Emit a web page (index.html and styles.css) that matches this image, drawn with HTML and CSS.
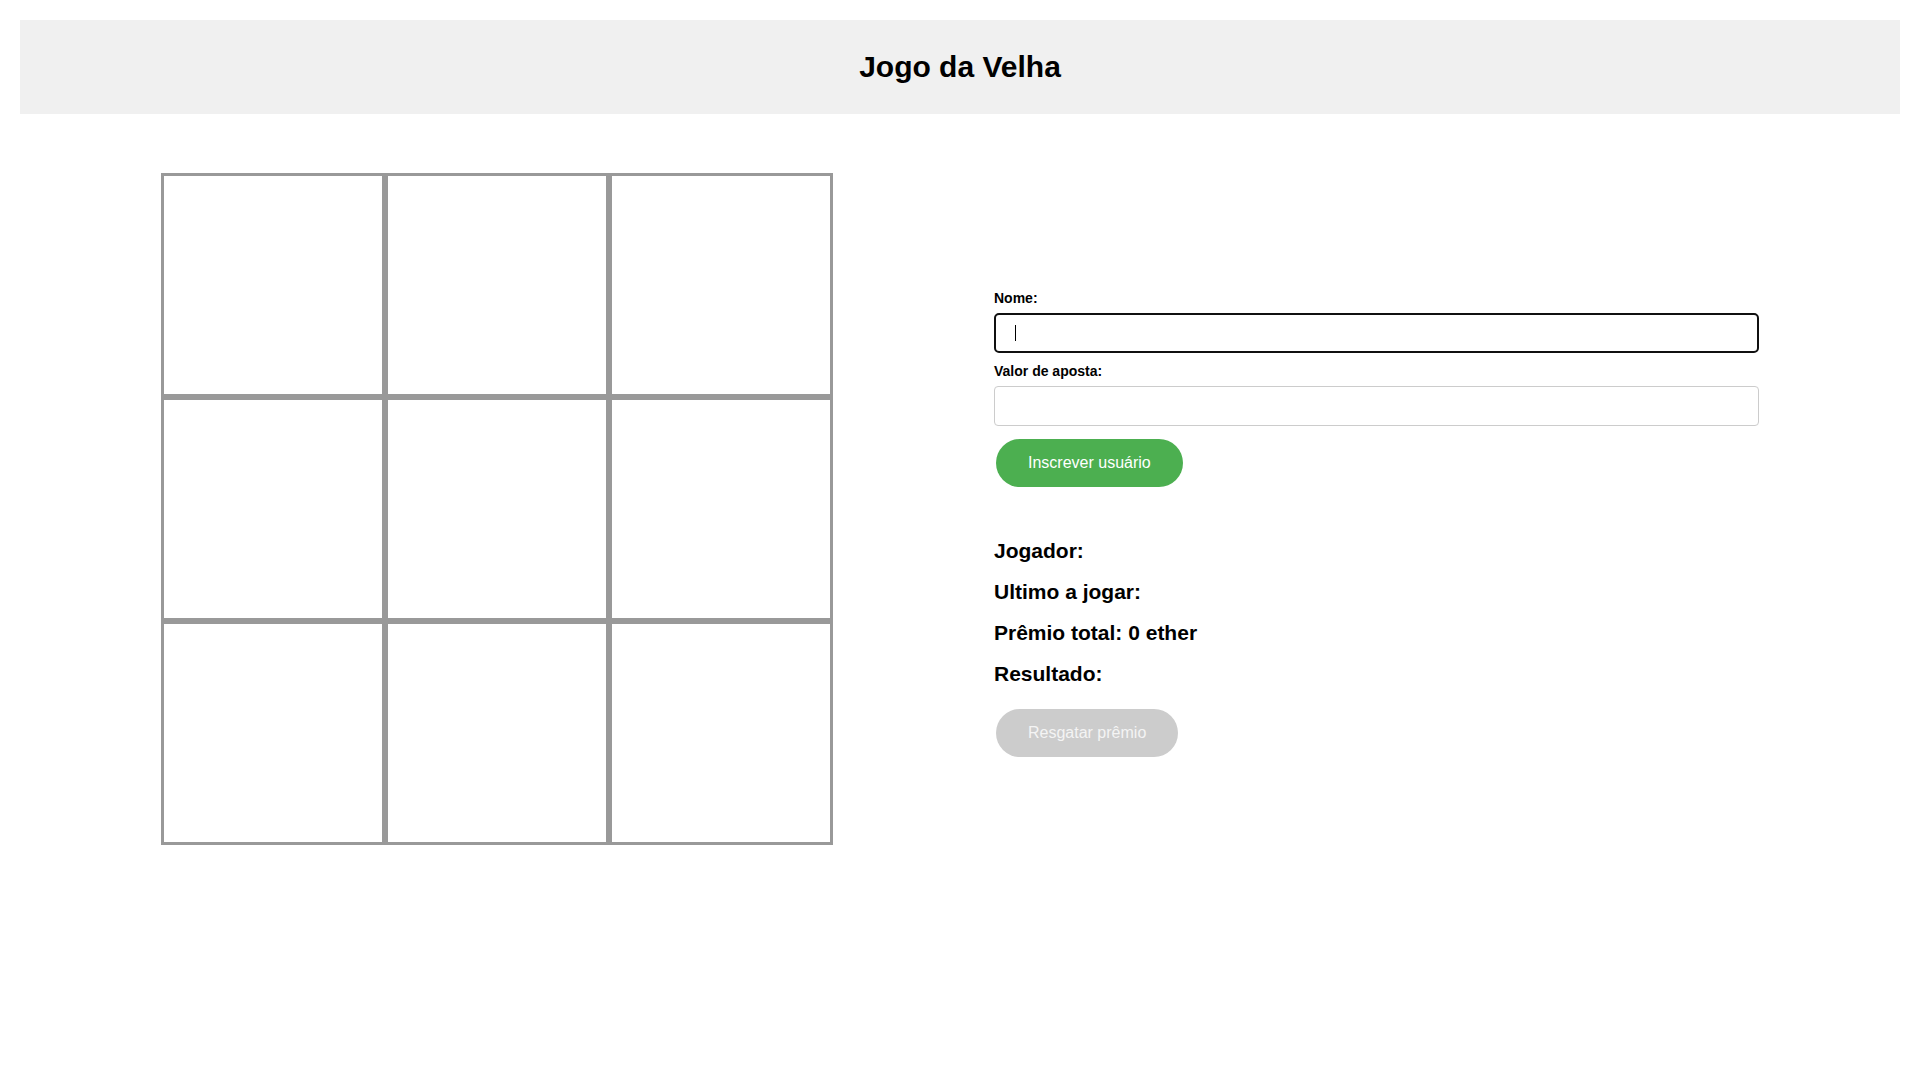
FILE: index.html
```html
<!DOCTYPE html>
<html lang="pt-BR">
<head>
<meta charset="utf-8">
<title>Jogo da Velha</title>
<link rel="stylesheet" href="styles.css">
</head>
<body>
<header class="topbar">
  <h1 class="title">Jogo da Velha</h1>
</header>
<main class="layout">
  <div class="board">
    <div class="cell"></div><div class="cell"></div><div class="cell"></div>
    <div class="cell"></div><div class="cell"></div><div class="cell"></div>
    <div class="cell"></div><div class="cell"></div><div class="cell"></div>
  </div>
  <section class="panel">
    <label class="field-label" for="nome">Nome:</label>
    <div class="input-wrap">
      <input class="text-input is-focused" id="nome" type="text">
      <span class="caret"></span>
    </div>
    <label class="field-label" for="valor">Valor de aposta:</label>
    <input class="text-input" id="valor" type="text">
    <button class="btn btn-green" type="button">Inscrever usuário</button>
    <div class="info">
      <p class="info-line">Jogador:</p>
      <p class="info-line">Ultimo a jogar:</p>
      <p class="info-line">Prêmio total: 0 ether</p>
      <p class="info-line">Resultado:</p>
    </div>
    <button class="btn btn-disabled" type="button" disabled>Resgatar prêmio</button>
  </section>
</main>
</body>
</html>
```

FILE: styles.css
```css
* { box-sizing: border-box; }

body {
  margin: 20px;
  font-family: "Liberation Sans", Arial, sans-serif;
  color: #000;
  background: #fff;
}

.topbar {
  background: #f0f0f0;
  height: 94px;
}

.title {
  margin: 0;
  font-size: 30px;
  font-weight: bold;
  line-height: 94px;
  text-align: center;
  color: #000;
}

.layout {
  display: flex;
  align-items: flex-start;
  gap: 161px;
  padding: 0 141px;
  margin-top: 59px;
}

.board {
  display: grid;
  grid-template-columns: repeat(3, 224px);
  grid-template-rows: repeat(3, 224px);
  flex: none;
}

.cell {
  border: 3px solid #999;
  background: #fff;
}

.panel {
  width: 765px;
  flex: none;
  padding-top: 117px;
  display: flex;
  flex-direction: column;
  align-items: flex-start;
}

.field-label {
  display: block;
  font-size: 14px;
  font-weight: bold;
  line-height: 16px;
  margin-bottom: 7px;
}

.input-wrap {
  position: relative;
  width: 100%;
  margin-bottom: 10px;
}

.text-input {
  display: block;
  width: 100%;
  height: 40px;
  padding: 0 19px;
  font-family: "Liberation Sans", Arial, sans-serif;
  font-size: 14px;
  border: 1px solid #ccc;
  border-radius: 4px;
  background: #fff;
  outline: none;
}

.text-input.is-focused {
  border: 2px solid #101010;
  border-radius: 5px;
  caret-color: transparent;
}

.caret {
  position: absolute;
  left: 21px;
  top: 12px;
  width: 1px;
  height: 16px;
  background: #000;
}

.btn {
  border: none;
  border-radius: 24px;
  height: 48px;
  padding: 0 32px;
  font-family: "Liberation Sans", Arial, sans-serif;
  font-size: 16px;
  color: #fff;
  margin-left: 2px;
}

.btn-green {
  background: #4caf50;
  margin-top: 13px;
}

.btn-disabled {
  background: #cccccc;
  color: #f4f4f4;
  margin-top: 23px;
}

.info {
  margin-top: 52px;
}

.info-line {
  margin: 0 0 17px;
  font-size: 21px;
  font-weight: bold;
  line-height: 24px;
}

.info-line:last-child {
  margin-bottom: 0;
}
```
